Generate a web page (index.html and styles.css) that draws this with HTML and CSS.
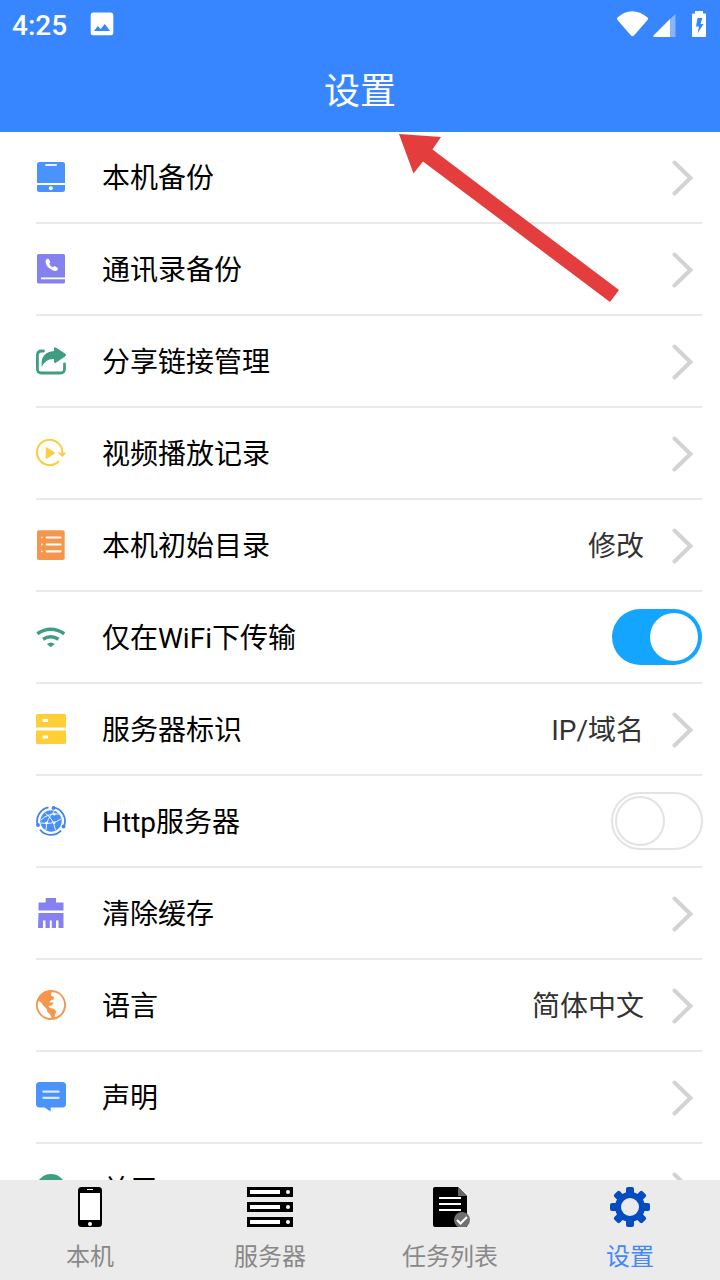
FILE: index.html
```html
<!DOCTYPE html>
<html lang="zh-CN">
<head>
<meta charset="utf-8">
<title>设置</title>
<link rel="stylesheet" href="styles.css">
</head>
<body>
<div class="screen">
  <header class="header">
    <div class="status">
      <span class="clock">4:25</span>
      <svg class="picture" width="24" height="24" viewBox="0 0 24 24"><path fill="#fff" fill-rule="evenodd" d="M3 .5H21Q23.3.5 23.3 3V21Q23.3 23.3 21 23.3H3Q.7 23.3.7 21V3Q.7.500 3 .5ZM4 19H20L14.800 12L10.700 17L7.800 14Z"/></svg>
      <svg class="signals" width="92" height="30" viewBox="0 0 92 30">
        <path fill="#fff" d="M1.500 8.500Q16-4 31.500 8.500Q32.600 9.500 31.500 11L18 26.500Q16.500 28 15 26.500L1.500 11Q.5 9.500 1.500 8.500Z"/>
        <path fill="#fff" opacity=".4" d="M59.500 5V28H54V10Z"/>
        <path fill="#fff" d="M54 10V28H37.500V26.500Z"/>
        <path fill="#fff" fill-rule="evenodd" d="M79 2H87V4.500H89Q90 4.500 90 5.500V27Q90 28 89 28H77Q76 28 76 27V5.500Q76 4.500 77 4.500H79ZM81.500 9L80 17.500H83L81.500 24.500L87.500 15H84.500L86.500 9Z"/>
      </svg>
    </div>
    <h1 class="title">设置</h1>
  </header>

  <main class="list">
    <div class="row">
      <svg class="icon" viewBox="0 0 30 30"><path fill="#4a93fc" d="M1 21V2.500Q1 0 3.500 0H26.500Q29 0 29 2.500V21ZM1 23H29V27.500Q29 30 26.500 30H3.500Q1 30 1 27.500Z"/><rect x="9" y="2" width="12" height="2" rx="1" fill="#e6f1ff"/><circle cx="14.800" cy="26.200" r="2" fill="#fff"/></svg>
      <span class="label">本机备份</span>
      <svg class="chevron" viewBox="0 0 22 36"><path d="M2.500 2.500L18.500 18L2.500 33.500"/></svg>
    </div>
    <div class="row">
      <svg class="icon" viewBox="0 0 30 30"><path fill="#8582f0" d="M2.500 0H27.500Q29 0 29 1.500V23.600H5V25.200H29V28Q29 29.600 27.500 29.600H2.500Q1 29.600 1 28V1.500Q1 0 2.500 0Z"/><path fill="#fff" d="M10.400 5.300Q12 4.200 13 5.500L14.200 7.700Q14.400 8.700 13.200 9.800Q14.300 12.500 16.800 13.300Q18 12 19 12.300L21.500 13.800Q22.600 14.800 21.300 16.200Q19 18 15 15.300Q10.500 12.700 9.700 8.700Q9.300 6.500 10.400 5.300Z"/></svg>
      <span class="label">通讯录备份</span>
      <svg class="chevron" viewBox="0 0 22 36"><path d="M2.500 2.500L18.500 18L2.500 33.500"/></svg>
    </div>
    <div class="row">
      <svg class="icon" viewBox="0 0 30 30"><path fill="none" stroke="#3d9e80" stroke-width="2.800" stroke-linecap="round" d="M7.500 5H5.500Q1.400 5 1.400 9V23Q1.400 27 5.500 27H24.300Q28.500 27 28.500 23V18"/><path fill="#3d9e80" d="M5.800 21Q4 6 18 5V2.500Q18 .7 19.800 1.500L29 7.500Q31 9 29 10.600L19.800 16.800Q18 17.700 18 15.500V13Q9.500 12.500 5.800 21Z"/></svg>
      <span class="label">分享链接管理</span>
      <svg class="chevron" viewBox="0 0 22 36"><path d="M2.500 2.500L18.500 18L2.500 33.500"/></svg>
    </div>
    <div class="row">
      <svg class="icon" viewBox="0 0 30 30"><path fill="none" stroke="#fcce3c" stroke-width="2" stroke-linecap="round" d="M22.500 23.500A12.700 12.700 0 1 1 26.300 15.500"/><path fill="#fcce3c" stroke="#fcce3c" stroke-linejoin="round" d="M10.200 9.500V20.600L18.700 15ZM22.500 14.700L26.300 18.600L29.700 14.700L26.300 16Z"/></svg>
      <span class="label">视频播放记录</span>
      <svg class="chevron" viewBox="0 0 22 36"><path d="M2.500 2.500L18.500 18L2.500 33.500"/></svg>
    </div>
    <div class="row">
      <svg class="icon" viewBox="0 0 30 30"><rect x="1" y=".3" width="27.700" height="29.700" rx="2" fill="#f6964c"/><g stroke="#fff" stroke-width="2.200" stroke-linecap="round"><path d="M10.700 7.500H24.500M10.700 14.500H24.500M10.700 21.300H24.500"/><path stroke-width="1.800" d="M5.800 7.500H6M5.800 14.500H6M5.800 21.300H6" opacity=".8"/></g></svg>
      <span class="label">本机初始目录</span>
      <span class="value">修改</span>
      <svg class="chevron" viewBox="0 0 22 36"><path d="M2.500 2.500L18.500 18L2.500 33.500"/></svg>
    </div>
    <div class="row">
      <svg class="icon" viewBox="0 0 30 30"><g fill="none" stroke="#3d9e80" stroke-width="3.500"><path d="M1.300 11.700Q14.700 2.700 28.300 11.700"/><path d="M7 17.300Q14.700 12.200 22.500 17.300"/></g><path fill="#3d9e80" d="M10.800 22Q14.800 18.800 18.800 22L14.800 25.200Z"/></svg>
      <span class="label">仅在WiFi下传输</span>
      <span class="switch on"></span>
    </div>
    <div class="row">
      <svg class="icon" viewBox="0 0 30 30"><path fill="#ffcf35" fill-rule="evenodd" d="M1.500 0H28.500Q30 0 30 1.500V13.400H0V1.500Q0 0 1.500 0ZM6.500 5V8H12V5ZM0 16.600H30V28.500Q30 30 28.500 30H1.500Q0 30 0 28.500ZM6.500 21.600V24.600H12V21.600Z"/></svg>
      <span class="label">服务器标识</span>
      <span class="value">IP/域名</span>
      <svg class="chevron" viewBox="0 0 22 36"><path d="M2.500 2.500L18.500 18L2.500 33.500"/></svg>
    </div>
    <div class="row">
      <svg class="icon" viewBox="0 0 30 30"><circle cx="15" cy="15" r="10.700" fill="#4a8ff5"/><g fill="none" stroke="#fff" stroke-width=".9"><path d="M5 14Q12 7 23 8M9.500 7.500Q17 12 19.500 24M18.500 5Q10 13 10 24M25 13Q16 19 5 17"/></g><g fill="#fff"><circle cx="18.300" cy="8.300" r="1.300"/><circle cx="10.300" cy="17" r="1.300"/><circle cx="18.200" cy="16.800" r="1.300"/></g><g fill="none" stroke="#4285ee" stroke-width="1.800"><path d="M1.500 18.500A14 14 0 0 1 12.500 1.300M17.500 1.300A14 14 0 0 1 28.300 19.500M25 24.600A14 14 0 0 1 4 23.700"/></g><g fill="#4285ee"><circle cx="17.500" cy="1.900" r="1.900"/><circle cx="2" cy="19" r="1.900"/><circle cx="27.500" cy="20.500" r="1.900"/></g></svg>
      <span class="label">Http服务器</span>
      <span class="switch"></span>
    </div>
    <div class="row">
      <svg class="icon" viewBox="0 0 30 30"><path fill="#8582f0" d="M9.700 0H20V4.500H27.500V12.500H2.500V4.500H9.700ZM2.500 15H27.500V30H22.500V22.500H20V30H15.800V22.500H13.800V30H9.500V22.500H7V30H2Z"/></svg>
      <span class="label">清除缓存</span>
      <svg class="chevron" viewBox="0 0 22 36"><path d="M2.500 2.500L18.500 18L2.500 33.500"/></svg>
    </div>
    <div class="row">
      <svg class="icon" viewBox="0 0 30 30"><circle cx="15" cy="15" r="15" fill="#f6964c"/><path fill="#fff" d="M2.500 11Q5.500 11.500 7.200 15.600L10.500 18.500Q11.500 20 11 21.500L14 24.200L15.800 28Q6 28.500 2.400 19Q1.200 14.500 2.500 11ZM15.500 2.200Q22 1.700 25.700 7Q28.500 11 28 16.500Q27 23.500 20.500 26.800Q17.800 27.500 19 25L20.300 21.500L17.800 18.800L14 18L12.500 16.500L16 15L18 12.500L13.500 12.500L14.500 10.500L17.500 9.500L18 7L15 5.500Z"/></svg>
      <span class="label">语言</span>
      <span class="value">简体中文</span>
      <svg class="chevron" viewBox="0 0 22 36"><path d="M2.500 2.500L18.500 18L2.500 33.500"/></svg>
    </div>
    <div class="row">
      <svg class="icon" viewBox="0 0 30 30"><path fill="#4a93fc" d="M3.500 0H26.500Q30 0 30 3.500V22Q30 25.400 26.500 25.400H14.700V29.500L8.500 25.400H3.500Q0 25.400 0 22V3.500Q0 0 3.500 0Z"/><path stroke="#d9e9ff" stroke-width="2.200" stroke-linecap="round" d="M7.400 9.700H22.600M7.400 15.800H22.600"/></svg>
      <span class="label">声明</span>
      <svg class="chevron" viewBox="0 0 22 36"><path d="M2.500 2.500L18.500 18L2.500 33.500"/></svg>
    </div>
    <div class="row">
      <svg class="icon" viewBox="0 0 30 30"><circle cx="15" cy="15" r="15" fill="#3d9e80"/></svg>
      <span class="label">关于</span>
      <svg class="chevron" viewBox="0 0 22 36"><path d="M2.500 2.500L18.500 18L2.500 33.500"/></svg>
    </div>
  </main>

  <nav class="tabs">
    <div class="tab">
      <svg width="48" height="40" viewBox="0 0 48 40"><rect x="12" width="24" height="40" rx="3.500"/><path fill="#fff" d="M14 6H34V33H14Z"/><path stroke="#fff" d="M21 2.500H27"/><circle cx="24" cy="37" r="2" fill="#fff"/></svg>
      <span>本机</span>
    </div>
    <div class="tab">
      <svg width="48" height="40" viewBox="0 0 48 40"><path d="M1 0H47V10H1ZM1 15H47V25H1ZM1 30H47V40H1Z"/><g fill="#fff"><path d="M4 3H34V7H4ZM4 18H34V22H4ZM4 33H34V37H4Z"/><circle cx="42" cy="5" r="2"/><circle cx="42" cy="20" r="2"/><circle cx="42" cy="35" r="2"/></g></svg>
      <span>服务器</span>
    </div>
    <div class="tab">
      <svg width="48" height="40" viewBox="0 0 48 40"><path d="M9 0H32L41 9V40H9Q7 40 7 38V2Q7 0 9 0Z"/><path fill="#666" d="M32 0L41 9H32Z"/><path stroke="#fff" stroke-width="2" d="M13 11H35M13 17H35M13 23H35"/><circle cx="36" cy="33" r="8" fill="#707070"/><path fill="none" stroke="#fff" stroke-width="2" d="M31 33L34.500 36.500L41 30"/></svg>
      <span>任务列表</span>
    </div>
    <div class="tab active">
      <svg width="48" height="40" viewBox="0 0 48 40"><g fill="#054cc0"><rect x="20" y="0" width="8" height="40" rx="2"/><rect x="20" y="0" width="8" height="40" rx="2" transform="rotate(45 24 20)"/><rect x="20" y="0" width="8" height="40" rx="2" transform="rotate(90 24 20)"/><rect x="20" y="0" width="8" height="40" rx="2" transform="rotate(135 24 20)"/><circle cx="24" cy="20" r="15"/></g><circle cx="24" cy="20" r="9" fill="#ebebeb"/></svg>
      <span>设置</span>
    </div>
  </nav>

  <svg class="pointer" width="222" height="170" viewBox="0 0 222 170"><path fill="#e43d3d" d="M0 0L42 3L33.500 15.500L220 156L211 168L24 27.500L14.500 39.500Z"/></svg>
</div>
</body>
</html>
```

FILE: styles.css
```css
*, *::before { box-sizing: border-box; }
body {
  margin: 0;
  font-family: Roboto, "Noto Sans CJK SC", sans-serif;
  background: #fff;
  color: #000;
}
.screen {
  position: relative;
  width: 720px;
  height: 1280px;
  display: flex;
  flex-direction: column;
  overflow: hidden;
}
.header {
  flex: none;
  height: 132px;
  background: #3786ff;
  color: #fff;
}
.status {
  display: flex;
  align-items: center;
  height: 48px;
  padding: 0 12px;
}
.clock {
  width: 78px;
  font-size: 28px;
  font-weight: 500;
  line-height: 46px;
  padding-top: 4px;
}
.signals { margin-left: auto; }
.title {
  margin: 0;
  padding-top: 2px;
  font-size: 36px;
  font-weight: 400;
  line-height: 84px;
  text-align: center;
}
.list {
  flex: 1;
  min-height: 0;
  overflow: hidden;
  padding: 0 18px 0 36px;
}
.row {
  display: flex;
  align-items: center;
  height: 92px;
  border-bottom: 2px solid #e9e9e9;
}
.icon { flex: none; width: 30px; height: 30px; }
.label {
  flex: 1;
  margin-left: 36px;
  padding-top: 4px;
  font-size: 28px;
  line-height: 40px;
}
.value {
  margin-right: 28px;
  padding-top: 4px;
  font-size: 28px;
  line-height: 40px;
  color: #333;
}
.chevron {
  flex: none;
  width: 22px;
  height: 36px;
  margin: 2px 8px 0 0;
  fill: none;
  stroke: #d3d3d3;
  stroke-width: 4;
  stroke-linecap: round;
}
.switch {
  display: flex;
  align-items: center;
  width: 92px;
  height: 58px;
  margin-right: -1px;
  padding: 0 2px;
  border: 2px solid #e3e3e3;
  border-radius: 29px;
}
.switch::before {
  content: "";
  width: 50px;
  height: 50px;
  border: 2px solid #e3e3e3;
  border-radius: 50%;
}
.switch.on {
  justify-content: flex-end;
  width: 90px;
  height: 56px;
  margin-right: 0;
  padding: 0 4px;
  border: 0;
  background: #14a5ff;
}
.switch.on::before {
  width: 48px;
  height: 48px;
  border: 0;
  background: #fff;
}
.tabs {
  flex: none;
  display: flex;
  height: 100px;
  background: #ebebeb;
}
.tab {
  flex: 1;
  display: flex;
  flex-direction: column;
  align-items: center;
  padding-top: 7px;
  color: #888;
  font-size: 24px;
  line-height: 36px;
}
.tab span { margin-top: 12px; }
.tab.active { color: #4287ff; }
.pointer { position: absolute; left: 399px; top: 134px; }
```
